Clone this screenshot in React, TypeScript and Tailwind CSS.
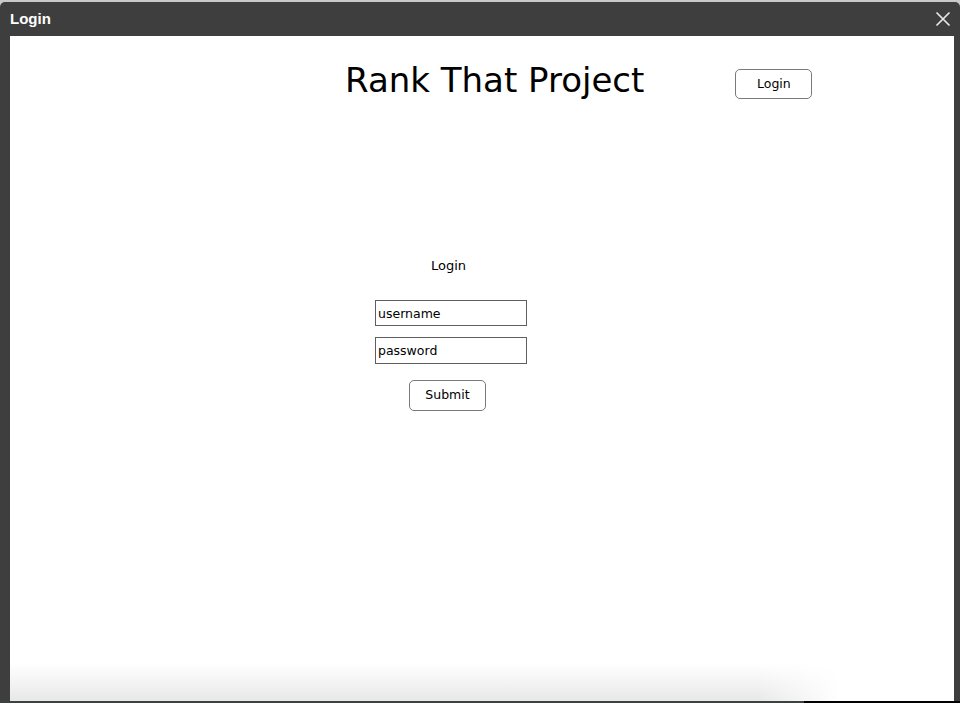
import React from "react";

// Login dialog: dark window frame, header with title + login button, centered form
export default function App() {
  return (
    <div className="h-[703px] w-[960px] overflow-hidden bg-[#c9c9c9] font-['DejaVu_Sans',sans-serif] text-black">
      <div className="mt-[2px] flex h-[701px] flex-col rounded-t-[5px] bg-[#3e3e3e]">
        {/* --- TITLE BAR --- */}
        <div className="flex h-[34px] shrink-0 items-center justify-between pl-[10px] pr-[9px]">
          <span className="font-['Liberation_Sans',sans-serif] text-[15px] font-bold text-white">Login</span>
          <svg width="16" height="16" viewBox="0 0 16 16" className="text-[#e6e6e6]">
            <path d="M1.5 1.5 L14.5 14.5 M14.5 1.5 L1.5 14.5" stroke="currentColor" strokeWidth="1.7" fill="none" />
          </svg>
        </div>

        {/* --- CONTENT --- */}
        <div className="ml-[10px] mr-[6px] flex flex-1 flex-col bg-white">
          <header className="flex items-start pt-[24px]">
            <h1 className="ml-[335px] text-[34px] leading-[40px] font-normal">Rank That Project</h1>
            <button className="ml-[91px] mt-[9px] h-[30px] w-[77px] rounded-[5px] border border-[#7a7a7a] bg-white text-[12.5px]">
              Login
            </button>
          </header>

          <div className="ml-[365px] mt-[158px] flex w-[152px] flex-col items-center">
            <div className="-ml-[5px] text-[13px] leading-[16px]">Login</div>
            <input
              placeholder="username"
              className="mt-[26px] h-[26px] w-[152px] border border-[#5f5f5f] px-[2px] text-[12.5px] outline-none placeholder:text-black"
            />
            <input
              placeholder="password"
              className="mt-[11px] h-[27px] w-[152px] border border-[#5f5f5f] px-[2px] text-[12.5px] outline-none placeholder:text-black"
            />
            <button className="mt-[16px] -ml-[7px] h-[31px] w-[77px] rounded-[5px] border border-[#7a7a7a] bg-white text-[12.5px]">
              Submit
            </button>
          </div>

          <div className="flex-1" />
          <div className="h-[38px] w-[830px] bg-gradient-to-b from-white to-[#e8e8e8] [mask-image:linear-gradient(to_right,black_90%,transparent)]" />
        </div>

        {/* --- BOTTOM EDGE --- */}
        <div className="flex h-[2px] shrink-0">
          <div className="w-[804px] bg-[#3c4141]" />
          <div className="flex-1 bg-black" />
        </div>
      </div>
    </div>
  );
}
